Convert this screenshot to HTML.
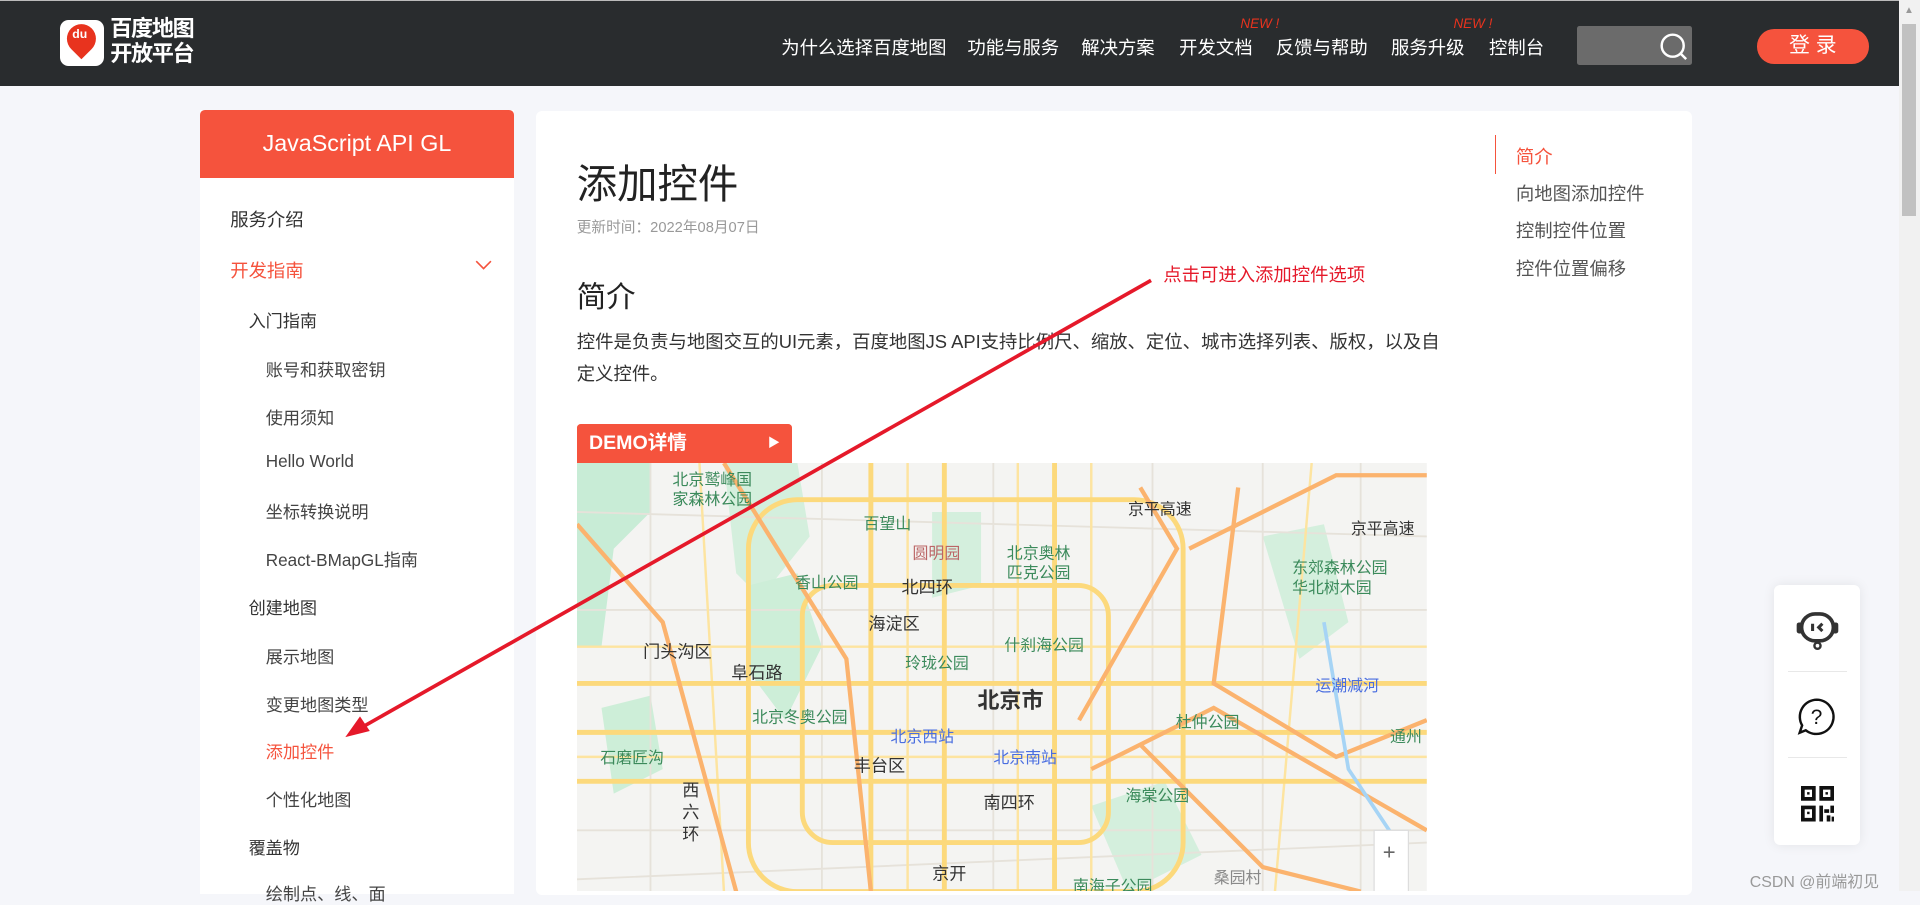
<!DOCTYPE html>
<html><head><meta charset="utf-8">
<style>
html,body{margin:0;padding:0;}
body{width:1568px;height:728px;overflow:hidden;zoom:1.22449;background:#f5f6fa;font-family:"Liberation Sans","Noto Sans CJK SC",sans-serif;position:relative;}
.a{position:absolute;white-space:nowrap;}
.hdr{position:absolute;left:0;top:0;width:1551px;height:70px;background:#292c2e;border-top:1px solid #bbb;box-sizing:border-box;}
.nav{color:#fff;font-size:15px;top:28px;}
.new{color:#e8331e;font-size:11px;font-style:italic;top:13px;}
.side{position:absolute;left:163px;top:90px;width:257px;height:640px;background:#fff;}
.sh{position:absolute;left:163px;top:90px;width:257px;height:55px;background:#f5533d;border-radius:4px 4px 0 0;color:#fff;font-size:19px;text-align:center;line-height:55px;}
.s1{font-size:15px;color:#333;left:188px;}
.s2{font-size:14px;color:#333;left:203px;}
.s3{font-size:14px;color:#444;left:217px;}
.main{position:absolute;left:438px;top:91px;width:944px;height:640px;background:#fff;border-radius:5px;}
.toc{font-size:15px;color:#555;left:1238px;}
.sb{position:absolute;left:1551px;top:0;width:17px;height:728px;background:#f1f1f1;}
</style></head><body>
<div class="hdr"></div>
<div class="a" style="left:49px;top:16px;width:36px;height:38px;background:#fff;border-radius:7px;"></div>
<div class="a" style="left:55px;top:20px;width:24px;height:24px;background:#e8331e;border-radius:50% 50% 50% 0;transform:rotate(-45deg);"></div>
<div class="a" style="left:59px;top:22px;color:#fff;font-size:10px;font-weight:bold;">du</div>
<div class="a" style="left:90px;top:14px;color:#fff;font-size:18px;line-height:20px;font-weight:bold;letter-spacing:-1px;">百度地图<br>开放平台</div>
<div class="a nav" style="left:638px;">为什么选择百度地图</div>
<div class="a nav" style="left:790px;">功能与服务</div>
<div class="a nav" style="left:883px;">解决方案</div>
<div class="a nav" style="left:963px;">开发文档</div>
<div class="a nav" style="left:1042px;">反馈与帮助</div>
<div class="a nav" style="left:1136px;">服务升级</div>
<div class="a nav" style="left:1216px;">控制台</div>
<div class="a new" style="left:1013px;">NEW !</div>
<div class="a new" style="left:1187px;">NEW !</div>
<div class="a" style="left:1288px;top:21px;width:94px;height:32px;background:#6b6b6b;border-radius:2px;"></div>
<svg class="a" style="left:1354px;top:25px" width="26" height="26" viewBox="0 0 26 26"><circle cx="12" cy="12" r="9" fill="none" stroke="#fff" stroke-width="2"/><path d="M18 18l5 5" stroke="#fff" stroke-width="2"/></svg>
<div class="a" style="left:1435px;top:24px;width:91px;height:28px;background:#f5533d;border-radius:14px;color:#fff;font-size:17px;text-align:center;line-height:28px;">登 录</div>

<div class="side"></div>
<div class="sh">JavaScript API GL</div>
<div class="a s1" style="top:168px;">服务介绍</div>
<div class="a s1" style="top:210px;color:#f5533d;">开发指南</div>
<svg class="a" style="left:388px;top:212px" width="14" height="10"><path d="M1 1l6 6 6-6" fill="none" stroke="#f5533d" stroke-width="1.3"/></svg>
<div class="a s2" style="top:251px;">入门指南</div>
<div class="a s3" style="top:291px;">账号和获取密钥</div>
<div class="a s3" style="top:330px;">使用须知</div>
<div class="a s3" style="top:368px;">Hello World</div>
<div class="a s3" style="top:407px;">坐标转换说明</div>
<div class="a s3" style="top:446px;">React-BMapGL指南</div>
<div class="a s2" style="top:485px;">创建地图</div>
<div class="a s3" style="top:525px;">展示地图</div>
<div class="a s3" style="top:564px;">变更地图类型</div>
<div class="a s3" style="top:603px;color:#f5533d;">添加控件</div>
<div class="a s3" style="top:642px;">个性化地图</div>
<div class="a s2" style="top:681px;">覆盖物</div>
<div class="a s3" style="top:719px;">绘制点、线、面</div>

<div class="main"></div>
<div class="a" style="left:471px;top:123px;font-size:33px;color:#222;">添加控件</div>
<div class="a" style="left:471px;top:176px;font-size:12px;color:#999;">更新时间：2022年08月07日</div>
<div class="a" style="left:471px;top:224px;font-size:24px;color:#222;">简介</div>
<div class="a" style="left:471px;top:266px;font-size:15px;color:#333;line-height:26px;white-space:normal;width:712px;">控件是负责与地图交互的UI元素，百度地图JS API支持比例尺、缩放、定位、城市选择列表、版权，以及自定义控件。</div>
<div class="a" style="left:1221px;top:110px;width:1px;height:32px;background:#f5533d;"></div>
<div class="a toc" style="left:1238px;top:117px;color:#f5533d;">简介</div>
<div class="a toc" style="top:147px;">向地图添加控件</div>
<div class="a toc" style="top:177px;">控制控件位置</div>
<div class="a toc" style="top:208px;">控件位置偏移</div>

<div class="a" style="left:471px;top:346px;width:176px;height:32px;background:#f5533d;border-radius:3px 3px 0 0;color:#fff;font-size:16px;font-weight:bold;line-height:32px;"><span style="margin-left:10px">DEMO详情</span><span style="position:absolute;right:10px;font-size:10px;">▶</span></div>

<svg class="a" style="left:471px;top:378px" width="694" height="350" viewBox="0 0 694 350" font-family="Liberation Sans,Noto Sans CJK SC,sans-serif">
<rect width="694" height="350" fill="#f4f4f2"/>
<path d="M0 0h60v40l-30 30 -10 80h-20z" fill="#c8ecd6"/>
<path d="M120 0h60l10 60 -40 50 -20 -20z" fill="#d4efdd"/>
<path d="M140 100l40 -10 20 60 -30 60 -30 -40z" fill="#cdeed8"/>
<path d="M20 200l40 -10 10 60 -40 20z" fill="#cdeed8"/>
<path d="M290 40l40 0 0 60 -40 10z" fill="#d4efdd"/>
<path d="M560 60l50 -10 20 80 -40 30z" fill="#d4efdd"/>
<path d="M420 280l60 -20 30 60 -60 30z" fill="#d4efdd"/>
<g fill="none" stroke="#e6e2da" stroke-width="1.5">
<path d="M0 120h694M0 300h694M60 0v350M200 0v350M340 0v350M470 0v350M560 0v350M640 0v350M0 40l694 20M0 340l694 -30"/>
</g>
<g fill="none" stroke="#fde4a0" stroke-width="2">
<path d="M0 150h694M0 240h694M270 0v350M360 0v350M420 0v350M100 0l20 350M600 0l-30 350"/>
</g>
<g fill="none" stroke="#fcd97c" stroke-width="4">
<rect x="184" y="100" width="250" height="210" rx="25"/>
<rect x="140" y="30" width="355" height="320" rx="40"/>
<path d="M0 180h694M0 220h694M0 260h694M300 0v350M240 0v350M390 0v350"/>
</g>
<g fill="none" stroke="#fbb36e" stroke-width="3.5">
<path d="M120 0l100 160 20 190"/><path d="M460 20l30 50 -80 140"/><path d="M500 70l120 -60 74 0"/><path d="M540 20l-20 160 100 60 74 -30"/><path d="M420 250l100 -50 174 100"/><path d="M0 50l70 80 60 220"/><path d="M460 230l100 100 80 20"/>
</g>
<path d="M610 130l20 120 40 60" fill="none" stroke="#a6d4f5" stroke-width="3"/>
<g font-size="13" fill="#333">
<text x="78" y="18" fill="#3b8a5b">北京鹫峰国</text><text x="78" y="34" fill="#3b8a5b">家森林公园</text>
<text x="234" y="54" fill="#3b8a5b">百望山</text>
<text x="274" y="78" fill="#b66">圆明园</text>
<text x="351" y="78" fill="#3b8a5b">北京奥林</text><text x="351" y="94" fill="#3b8a5b">匹克公园</text>
<text x="178" y="102" fill="#3b8a5b">香山公园</text>
<text x="265" y="106" font-size="14">北四环</text>
<text x="238" y="136" font-size="14">海淀区</text>
<text x="349" y="153" fill="#3b8a5b">什刹海公园</text>
<text x="54" y="159" font-size="14">门头沟区</text>
<text x="126" y="176" font-size="14">阜石路</text>
<text x="268" y="168" fill="#3b8a5b">玲珑公园</text>
<text x="327" y="200" font-size="18" font-weight="bold">北京市</text>
<text x="143" y="212" fill="#3b8a5b">北京冬奥公园</text>
<text x="256" y="228" fill="#4a6ee0">北京西站</text>
<text x="340" y="245" fill="#4a6ee0">北京南站</text>
<text x="226" y="252" font-size="14">丰台区</text>
<text x="19" y="245" fill="#3b8a5b">石磨匠沟</text>
<text x="332" y="282" font-size="14">南四环</text>
<text x="448" y="276" fill="#3b8a5b">海棠公园</text>
<text x="489" y="216" fill="#3b8a5b">杜仲公园</text>
<text x="584" y="90" fill="#3b8a5b">东郊森林公园</text><text x="584" y="106" fill="#3b8a5b">华北树木园</text>
<text x="450" y="42">京平高速</text>
<text x="632" y="58">京平高速</text>
<text x="603" y="186" fill="#4a6ee0">运潮减河</text>
<text x="664" y="228" fill="#3b8a5b">通州</text>
<text x="86" y="272" font-size="14">西</text><text x="86" y="290" font-size="14">六</text><text x="86" y="308" font-size="14">环</text>
<text x="290" y="340" font-size="14">京开</text>
<text x="405" y="350" fill="#3b8a5b">南海子公园</text>
<text x="520" y="343" fill="#888">桑园村</text>
</g>
<rect x="651" y="300" width="28" height="50" fill="#fff" stroke="#ddd"/>
<text x="658" y="324" font-size="18" fill="#666">+</text>
</svg>

<svg class="a" style="left:0;top:0" width="1568" height="728"><line x1="940" y1="229" x2="292" y2="596" stroke="#e5192a" stroke-width="3"/><path d="M282 602l12 -17 8 12z" fill="#e5192a"/></svg>
<div class="a" style="left:950px;top:213px;font-size:15px;color:#e5192a;">点击可进入添加控件选项</div>

<div class="a" style="left:1449px;top:478px;width:70px;height:212px;background:#fff;border-radius:5px;box-shadow:0 0 10px rgba(0,0,0,0.08);"></div>
<div class="a" style="left:1460px;top:548px;width:48px;height:1px;background:#e8e8e8;"></div>
<div class="a" style="left:1460px;top:618px;width:48px;height:1px;background:#e8e8e8;"></div>
<svg class="a" style="left:1464px;top:497px" width="40" height="36" viewBox="0 0 40 36"><rect x="7" y="4" width="26" height="22" rx="11" fill="none" stroke="#333" stroke-width="3"/><rect x="3" y="11" width="5" height="9" rx="2" fill="#333"/><rect x="32" y="11" width="5" height="9" rx="2" fill="#333"/><path d="M16 12v6M24 12l-3 3 3 3" stroke="#333" stroke-width="2.5" fill="none"/><circle cx="20" cy="30" r="2.5" fill="none" stroke="#333" stroke-width="2"/></svg>
<svg class="a" style="left:1467px;top:568px" width="34" height="34" viewBox="0 0 34 34"><path d="M17 3a14 14 0 1 1 -9 25l-5 2 2 -6a14 14 0 0 1 12 -21z" fill="none" stroke="#111" stroke-width="2"/><text x="12" y="23" font-size="17" fill="#111" font-family="Liberation Sans">?</text></svg>
<svg class="a" style="left:1471px;top:642px" width="27" height="29" viewBox="0 0 27 29" fill="#111"><path d="M0 0h12v12h-12zM3 3v6h6v-6zM15 0h12v12h-12zM18 3v6h6v-6zM0 16h12v13h-12zM3 19v7h6v-7zM15 16h3v13h-3zM19 19h4v3h-4zM24 16h3v6h-3zM21 24h3v5h-3zM25 25h2v4h-2z"/><rect x="5" y="5" width="2" height="2"/><rect x="20" y="5" width="2" height="2"/><rect x="5" y="21" width="2" height="2"/></svg>
<div class="a" style="left:1429px;top:710px;font-size:13px;color:#999;">CSDN @前端初见</div>

<div class="sb"></div>
<div class="a" style="left:1553px;top:20px;width:12px;height:156px;background:#c1c1c1;"></div>
<div class="a" style="left:1555px;top:4px;font-size:8px;color:#999;">▲</div>
</body></html>
